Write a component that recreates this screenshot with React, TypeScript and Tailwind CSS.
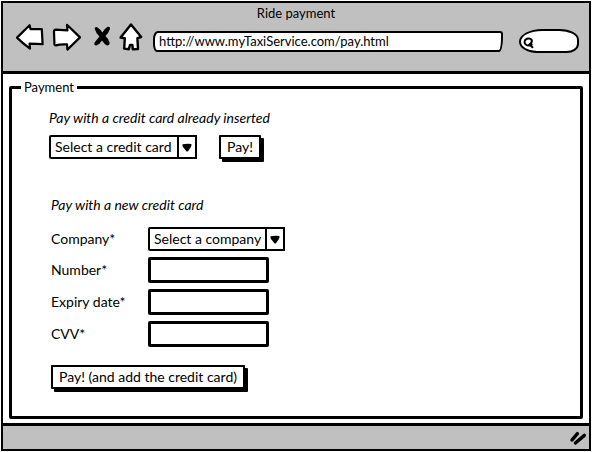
import type { ReactNode } from "react";

function ToolButton({ label, children, className }: { label: string; children: ReactNode; className: string }) {
  return (
    <button type="button" aria-label={label} className={`shrink-0 ${className}`}>
      {children}
    </button>
  );
}

function Toolbar() {
  return (
    <div className="flex items-start pl-3 pr-2.5">
      <ToolButton label="Back" className="mr-2">
        <svg width="29" height="28" viewBox="0 0 29 28" fill="#fff" stroke="#000" strokeWidth="2.2" strokeLinejoin="round" strokeLinecap="round">
          <path d="M2 14.6 14.6 2.2 15.6 6.2 26.8 6.2 27.6 21.2 14.6 20.6 15 25.6Q8 20.6 2 14.6Z" />
        </svg>
      </ToolButton>
      <ToolButton label="Forward" className="mr-3">
        <svg width="29" height="28" viewBox="0 0 29 28" fill="#fff" stroke="#000" strokeWidth="2.2" strokeLinejoin="round" strokeLinecap="round">
          <path d="M2 9Q1.8 6.8 3.8 6.6L15.4 7.4 15 1.8 28 14.4 15.4 26.6 15 21.4Q8 21 4 22.4Q2 22.4 2.4 19.6Z" />
        </svg>
      </ToolButton>
      <ToolButton label="Stop" className="mr-2">
        <svg width="18" height="28" viewBox="0 0 18 28" fill="#000">
          <path d="M1.6 5.4Q2.4 3.4 4.6 4.4Q7.4 6.4 9.4 9.4Q11.6 5.6 14.6 3.8Q17.4 3.2 17 6Q15.6 10 12.4 13Q15.4 15.6 16.6 19.4Q16.8 22.4 14 22.4Q11.2 21.2 9 17.6Q6.4 21.8 3.4 22.6Q.6 22.2 1.6 19.4L6.4 13.4Q2.6 9.6 1.6 5.4Z" />
        </svg>
      </ToolButton>
      <ToolButton label="Home" className="mr-2.5">
        <svg width="24" height="28" viewBox="0 0 24 28" fill="#fff" stroke="#000" strokeWidth="2.4" strokeLinejoin="round" strokeLinecap="round">
          <path d="M12 1.4 22.2 14 18.4 15.2 19 26 13.8 26.4 13.4 22 11 22 9.8 26.2 5.2 25.6 5.8 15.2 1.6 14.6Z" />
        </svg>
      </ToolButton>
      <input
        type="text"
        aria-label="Address"
        defaultValue="http://www.myTaxiService.com/pay.html"
        className="mt-2 h-[21px] min-w-0 flex-1 rounded-[5px_3px_4px_4px/8px_3px_14px_8px] border-2 border-black bg-white px-1 pb-0.5 text-[13px] outline-none"
      />
      <div className="relative ml-4 mt-1.5 h-6 w-[60px] shrink-0">
        <input
          type="search"
          aria-label="Search"
          className="h-6 w-full rounded-[26px_22px_14px_20px/14px_12px_10px_13px] border-2 border-black bg-white pl-4 pr-2 text-[13px] outline-none"
        />
        <svg className="absolute left-1 top-2" width="12" height="12" viewBox="0 0 12 12" fill="none" stroke="#000" strokeWidth="2" strokeLinecap="round">
          <path d="M8.6 7.6C4 9.8.8 7 1.8 4C2.8.8 8 .8 8.8 3.4C9.2 5.4 8 6.6 6.6 7.4L9.4 10.2" />
        </svg>
      </div>
    </div>
  );
}

function Select({ id, label, option, className }: { id: string; label?: string; option: string; className: string }) {
  return (
    <div className={`relative h-6 ${className}`}>
      <select
        id={id}
        aria-label={label}
        className="h-6 w-full appearance-none rounded-[2px] border-2 border-black bg-white pl-1 text-sm leading-5 outline-none"
      >
        <option>{option}</option>
      </select>
      <span className="pointer-events-none absolute inset-y-0 right-0 flex w-5 items-center justify-center border-x-2 border-black">
        <svg width="10" height="9" viewBox="0 0 10 9">
          <path d="M.6 1.2Q5 .4 9.4 1Q10 2.4 8.6 4.4L6 8.2Q5 9 4.2 8L1 4Q0 2.4.6 1.2Z" />
        </svg>
      </span>
    </div>
  );
}

function PayButton({ children, className }: { children: ReactNode; className: string }) {
  return (
    <button
      type="submit"
      className={`h-6 rounded-[1px] border-2 border-black bg-white text-sm leading-5 shadow-[3px_3px_0_#000] ${className}`}
    >
      {children}
    </button>
  );
}

function TextField({ id, label }: { id: string; label: string }) {
  return (
    <>
      <label htmlFor={id}>{label}</label>
      <input id={id} type="text" className="h-[26px] w-[121px] rounded-[2px] border-[3px] border-black bg-white px-1 outline-none" />
    </>
  );
}

export default function App() {
  return (
    <div className="bg-white p-px font-['Lato','Liberation_Sans',sans-serif] text-sm leading-5 text-black">
      <div className="border-2 border-black">
        <header className="h-[71px] border-b-[3px] border-black bg-[#c0c0c0]">
          <h1 className="text-center text-[13px]">Ride payment</h1>
          <Toolbar />
        </header>

        <main className="px-1.5 pb-1 pt-[3px]">
          <fieldset className="rounded-[2px] border-[3px] border-black pb-[27px] pl-[37px]">
            <legend className="-ml-7 px-[3px] text-[13px]">Payment</legend>

            <form className="mt-[11px]">
              <p className="italic">Pay with a credit card already inserted</p>
              <div className="mt-[7px] flex items-start gap-[22px]">
                <Select id="card" label="Credit card" option="Select a credit card" className="w-[148px]" />
                <PayButton className="w-[42px]">Pay!</PayButton>
              </div>
            </form>

            <form className="mt-9 pl-0.5">
              <p className="italic">Pay with a new credit card</p>
              <div className="mt-3 grid grid-cols-[97px_1fr] items-center gap-y-1.5">
                <label htmlFor="company">Company*</label>
                <Select id="company" option="Select a company" className="w-[137px]" />
                <TextField id="number" label="Number*" />
                <TextField id="expiry" label="Expiry date*" />
                <TextField id="cvv" label="CVV*" />
              </div>
              <PayButton className="mt-[18px] px-1.5">Pay! (and add the credit card)</PayButton>
            </form>
          </fieldset>
        </main>

        <footer className="flex h-[26px] items-center justify-end border-t-[3px] border-black bg-[#c0c0c0] pr-0.5">
          <svg width="18" height="16" viewBox="0 0 18 16" stroke="#000" strokeWidth="3.4" strokeLinecap="round">
            <path d="M3 10 8.4 3.6M6.4 13 15.4 5.4" />
          </svg>
        </footer>
      </div>
    </div>
  );
}
